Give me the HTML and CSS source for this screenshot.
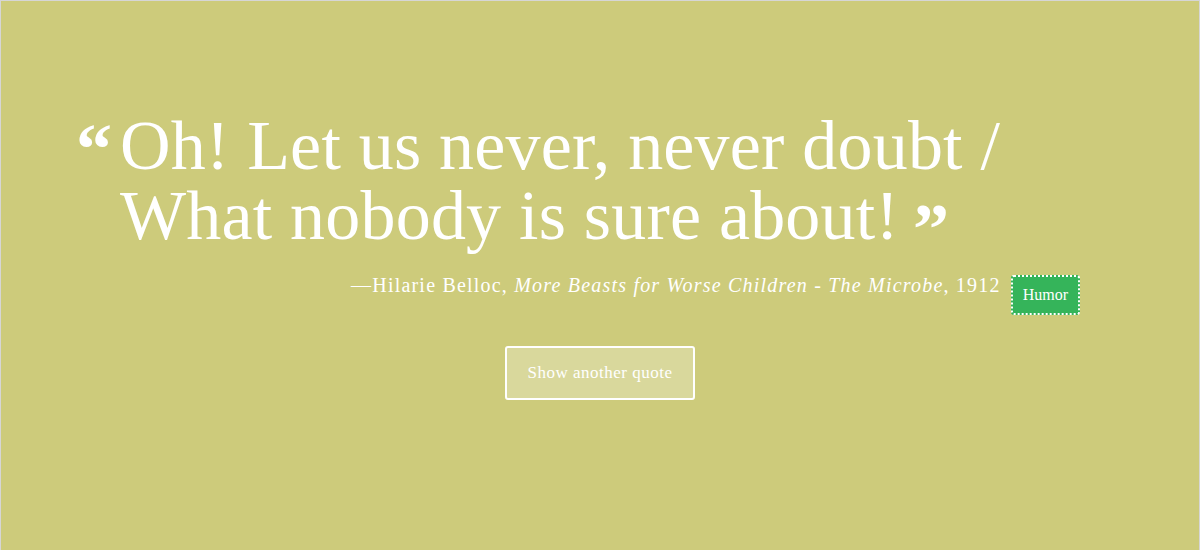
FILE: index.html
```html
<!DOCTYPE html>
<html lang="en">
<head>
<meta charset="utf-8">
<title>Random Quote</title>
<link rel="stylesheet" href="styles.css">
</head>
<body>
<main class="page">
  <section class="quote-box">
    <blockquote class="quote">
      <span class="open-q">&ldquo;</span>Oh! Let us never, never doubt / What nobody is sure about!<span class="close-q">&rdquo;</span>
    </blockquote>
    <div class="attribution">
      <p class="source">&mdash;Hilarie Belloc, <cite>More Beasts for Worse Children - The Microbe</cite>, 1912</p>
      <span class="tag">Humor</span>
    </div>
  </section>
  <button class="btn" type="button">Show another quote</button>
</main>
</body>
</html>
```
FILE: styles.css
```css
html, body {
  margin: 0;
  padding: 0;
}
body {
  font-family: "Liberation Serif", "Times New Roman", serif;
  color: #fff;
  background: #fff;
}
.page {
  box-sizing: border-box;
  min-height: 560px;
  border: 1px solid #d6d6d6;
  background: #cdcb7b;
  display: flex;
  flex-direction: column;
  align-items: center;
  padding-top: 110px;
}
.quote-box {
  width: 960px;
}
.quote {
  position: relative;
  margin: 0;
  font-size: 70px;
  line-height: 70px;
  letter-spacing: 0.2px;
  font-weight: 400;
}
.open-q {
  position: absolute;
  left: -44px;
  top: 8px;
  font-size: 72px;
  font-weight: 700;
  line-height: 60px;
}
.close-q {
  display: inline-block;
  margin-left: 14px;
  font-size: 72px;
  font-weight: 700;
  line-height: 30px;
  vertical-align: -14px;
}
.attribution {
  display: flex;
  justify-content: flex-end;
  align-items: flex-start;
  gap: 10px;
  margin-top: 19px;
}
.source {
  margin: 0;
  font-size: 20px;
  line-height: 30px;
  letter-spacing: 1.2px;
}
.source cite {
  font-style: italic;
}
.tag {
  margin-top: 5px;
  padding: 8px 10px;
  border: 2px dotted #fff;
  border-radius: 3px;
  background: #35b45a;
  font-size: 16px;
  line-height: 20px;
}
.btn {
  margin-top: 31px;
  padding: 15px 21px;
  border: 2px solid #fff;
  border-radius: 3px;
  background: #d9d89c;
  color: #fff;
  font-family: "Liberation Serif", "Times New Roman", serif;
  font-size: 17px;
  letter-spacing: 0.5px;
  line-height: 20px;
}
```
